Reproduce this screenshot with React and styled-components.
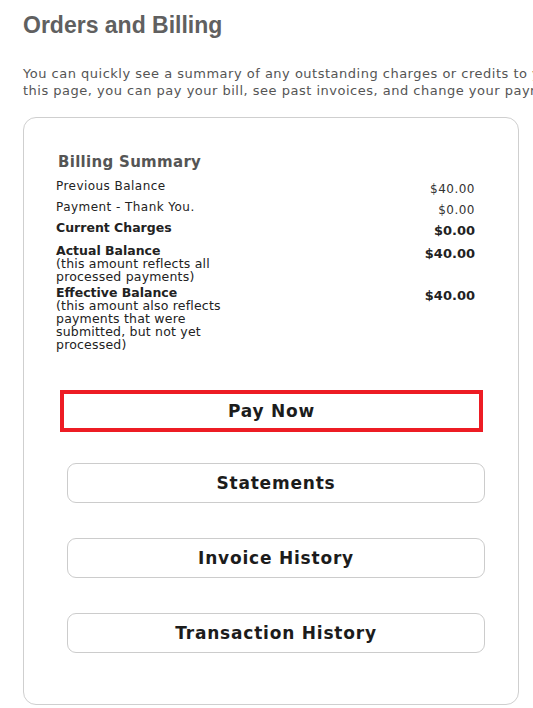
import React from "react";
import styled, { createGlobalStyle } from "styled-components";

const GlobalStyle = createGlobalStyle`
  html, body {
    margin: 0;
    padding: 0;
    background: #ffffff;
    overflow: hidden;
  }
  body {
    font-family: "DejaVu Sans", Verdana, sans-serif;
    color: #222;
  }
`;

const Page = styled.div`
  width: 533px;
  height: 708px;
  padding: 0 0 0 23px;
  box-sizing: border-box;
  overflow: hidden;
`;

const Title = styled.h1`
  margin: 0;
  padding-top: 11px;
  font-family: "Liberation Sans", Arial, sans-serif;
  font-size: 23px;
  line-height: 28px;
  font-weight: 700;
  color: #606060;
`;

const Intro = styled.p`
  margin: 26px 0 0 0;
  font-size: 13px;
  line-height: 17px;
  letter-spacing: 0.5px;
  color: #555;
  white-space: nowrap;
`;

const Card = styled.div`
  margin-top: 18px;
  width: 496px;
  height: 588px;
  box-sizing: border-box;
  border: 1px solid #cfcfcf;
  border-radius: 13px;
  padding-top: 35px;
`;

const Summary = styled.div`
  padding: 0 43px 0 32px;
`;

const SummaryTitle = styled.h2`
  margin: 0 0 9px 2px;
  font-size: 15px;
  line-height: 18px;
  font-weight: 700;
  letter-spacing: 0.3px;
  color: #555;
`;

const Row = styled.div`
  display: grid;
  grid-template-columns: 172px 1fr;
  min-height: ${(p) => p.$h}px;
  font-size: 12px;
  line-height: 13px;
  color: #222;
`;

const Label = styled.div`
  font-weight: ${(p) => (p.$bold ? 700 : 400)};
  font-size: ${(p) => (p.$bold ? 12.5 : 12)}px;
  letter-spacing: ${(p) => (p.$bold ? 0 : 0.45)}px;
`;

const Note = styled.div`
  font-weight: 400;
  font-size: 12.5px;
  letter-spacing: 0.2px;
`;

const Value = styled.div`
  text-align: right;
  padding-top: 3px;
  font-weight: ${(p) => (p.$bold ? 700 : 400)};
  font-size: ${(p) => (p.$bold ? 13 : 12)}px;
  letter-spacing: ${(p) => (p.$bold ? 0 : 0.5)}px;
  color: ${(p) => (p.$bold ? "#222" : "#333")};
`;

const Actions = styled.div`
  display: flex;
  flex-direction: column;
  margin-top: 39px;
`;

const ActionButton = styled.button`
  box-sizing: border-box;
  height: ${(p) => (p.$primary ? 42 : 40)}px;
  margin: ${(p) => (p.$primary ? "0 35px 31px 36px" : "0 33px 35px 43px")};
  border: ${(p) => (p.$primary ? "4px solid #ed1c24" : "1px solid #cccccc")};
  border-radius: ${(p) => (p.$primary ? 0 : 9)}px;
  background: #fff;
  font-family: "DejaVu Sans", Verdana, sans-serif;
  font-size: 17px;
  font-weight: 700;
  letter-spacing: 0.8px;
  color: #1c1c1c;
  cursor: pointer;
  &:last-child {
    margin-bottom: 0;
  }
`;

const rows = [
  { h: 21, label: "Previous Balance", value: "$40.00" },
  { h: 20, label: "Payment - Thank You.", value: "$0.00" },
  { h: 23, label: "Current Charges", value: "$0.00", bold: true },
  {
    h: 42,
    label: "Actual Balance",
    note: "(this amount reflects all processed payments)",
    value: "$40.00",
    bold: true,
  },
  {
    h: 0,
    label: "Effective Balance",
    note: "(this amount also reflects payments that were submitted, but not yet processed)",
    value: "$40.00",
    bold: true,
  },
];

const buttons = ["Pay Now", "Statements", "Invoice History", "Transaction History"];

export default function App() {
  return (
    <Page>
      <GlobalStyle />
      <Title>Orders and Billing</Title>
      <Intro>
        You can quickly see a summary of any outstanding charges or credits to your account. From
        <br />
        this page, you can pay your bill, see past invoices, and change your payment method.
      </Intro>
      <Card>
        <Summary>
          <SummaryTitle>Billing Summary</SummaryTitle>
          {rows.map((r) => (
            <Row key={r.label} $h={r.h}>
              <Label $bold={r.bold}>
                {r.label}
                {r.note && <Note>{r.note}</Note>}
              </Label>
              <Value $bold={r.bold}>{r.value}</Value>
            </Row>
          ))}
        </Summary>
        <Actions>
          {buttons.map((b, i) => (
            <ActionButton key={b} $primary={i === 0}>
              {b}
            </ActionButton>
          ))}
        </Actions>
      </Card>
    </Page>
  );
}
